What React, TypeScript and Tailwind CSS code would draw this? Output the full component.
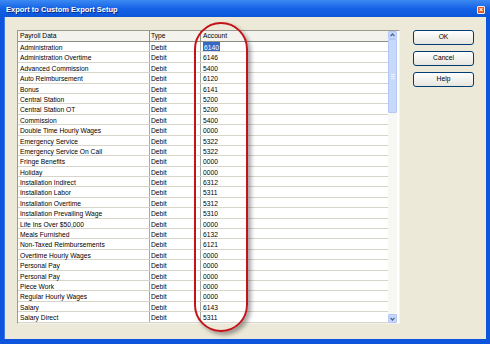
import React from 'react';

const rows: [string, string][] = [
  ['Administration', '6140'],
  ['Administration Overtime', '6146'],
  ['Advanced Commission', '5400'],
  ['Auto Reimbursement', '6120'],
  ['Bonus', '6141'],
  ['Central Station', '5200'],
  ['Central Station OT', '5200'],
  ['Commission', '5400'],
  ['Double Time Hourly Wages', '0000'],
  ['Emergency Service', '5322'],
  ['Emergency Service On Call', '5322'],
  ['Fringe Benefits', '0000'],
  ['Holiday', '0000'],
  ['Installation Indirect', '6312'],
  ['Installation Labor', '5311'],
  ['Installation Overtime', '5312'],
  ['Installation Prevailing Wage', '5310'],
  ['Life Ins Over $50,000', '0000'],
  ['Meals Furnished', '6132'],
  ['Non-Taxed Reimbursements', '6121'],
  ['Overtime Hourly Wages', '0000'],
  ['Personal Pay', '0000'],
  ['Personal Pay', '0000'],
  ['Piece Work', '0000'],
  ['Regular Hourly Wages', '0000'],
  ['Salary', '6143'],
  ['Salary Direct', '5311'],
];

const XpButton: React.FC<{ label: string }> = ({ label }) => (
  <button className="h-[15px] w-[61px] rounded-[3px] border border-[#003c74] bg-linear-to-b from-[#ffffff] to-[#e6e5de] text-[6.7px] leading-none text-black">
    {label}
  </button>
);

const Chevron: React.FC<{ up?: boolean }> = ({ up }) => (
  <svg width="5" height="4" viewBox="0 0 5 4">
    <path d={up ? 'M0.5 3.2 L2.5 1 L4.5 3.2' : 'M0.5 0.8 L2.5 3 L4.5 0.8'} stroke="#4d6185" strokeWidth="1.2" fill="none" />
  </svg>
);

const Scrollbar: React.FC = () => (
  <div className="flex w-[9px] flex-col bg-[#f7f7f3]">
    <div className="flex h-[8px] items-center justify-center rounded-[1px] border border-[#b4c8f6] bg-[#c6d6fc]">
      <Chevron up />
    </div>
    <div className="flex h-[74px] flex-col items-center justify-center gap-[1px] rounded-[1px] border border-[#b4c8f6] bg-[#c9d9fc]">
      <div className="h-px w-[4px] bg-[#eef3ff]" />
      <div className="h-px w-[4px] bg-[#eef3ff]" />
      <div className="h-px w-[4px] bg-[#eef3ff]" />
    </div>
    <div className="flex-1" />
    <div className="flex h-[9px] items-center justify-center rounded-[1px] border border-[#b4c8f6] bg-[#c6d6fc]">
      <Chevron />
    </div>
  </div>
);

export default function App() {
  return (
    <div className="relative flex h-[344px] w-[490px] flex-col overflow-hidden bg-[#0c55dc] font-['Liberation_Sans',Arial,sans-serif]">
      {/* title bar */}
      <div className="flex h-[17px] items-center justify-between bg-linear-to-b from-[#3c8af2] via-[#1562e6] to-[#0a55d8] pl-[6px] pr-[5px] pt-[2px]">
        <span className="text-[7.5px] font-bold text-white [text-shadow:1px_1px_0_#0a2a8a]">
          Export to Custom Export Setup
        </span>
        <div className="flex h-[8px] w-[8px] items-center justify-center rounded-[1px] border border-[#f4f4f4] bg-[#e0522c] text-[7px] font-bold leading-none text-white">
          ×
        </div>
      </div>

      {/* body */}
      <div className="mx-[4px] mb-[5px] flex flex-1 gap-[13px] border-l border-[#3c7cea] bg-[#ece9d8] pl-[12px] pt-[13px]">
        <div className="flex h-[294px] w-[383px] border-l border-t border-[#9d9b90] border-r-[#f4f3ee] border-b-[#f4f3ee] border-r border-b bg-white text-[6.7px] text-black">
          <div className="flex w-[370px] flex-col">
            <div className="flex h-[11px] border-b border-[#8f8d82] bg-[#f3f2ec] leading-[10px]">
              <div className="w-[132px] border-r border-[#8f8d82] pl-[2px]">Payroll Data</div>
              <div className="w-[51px] border-r border-[#8f8d82] pl-[1px]">Type</div>
              <div className="flex-1 pl-[2px]">Account</div>
            </div>
            {rows.map(([name, acct], i) => (
              <div key={i} className="flex h-[10.4px] border-b border-[#d7d4ca] leading-[9px]">
                <div className="h-full w-[132px] border-r border-[#a9a8a2] pl-[2px] pt-[1px] whitespace-nowrap">{name}</div>
                <div className="h-full w-[51px] border-r border-[#a9a8a2] pl-[1px] pt-[1px]">Debit</div>
                <div className="h-full flex-1 pl-[2px]">
                  {i === 0 ? (
                    <span className="inline-block h-full bg-[#316ac5] px-[1px] pt-[1px] text-white">{acct}</span>
                  ) : (
                    <span className="inline-block pt-[1px]">{acct}</span>
                  )}
                </div>
              </div>
            ))}
          </div>
          <Scrollbar />
        </div>

        <div className="flex flex-col gap-[6px]">
          <XpButton label="OK" />
          <XpButton label="Cancel" />
          <XpButton label="Help" />
        </div>
      </div>

      {/* red annotation ring */}
      <div className="absolute left-[194px] top-[22px] h-[310px] w-[54px] rounded-[27px] border-2 border-[#c4121a] shadow-[3px_3px_4px_rgba(0,0,0,0.35)]" />
    </div>
  );
}
